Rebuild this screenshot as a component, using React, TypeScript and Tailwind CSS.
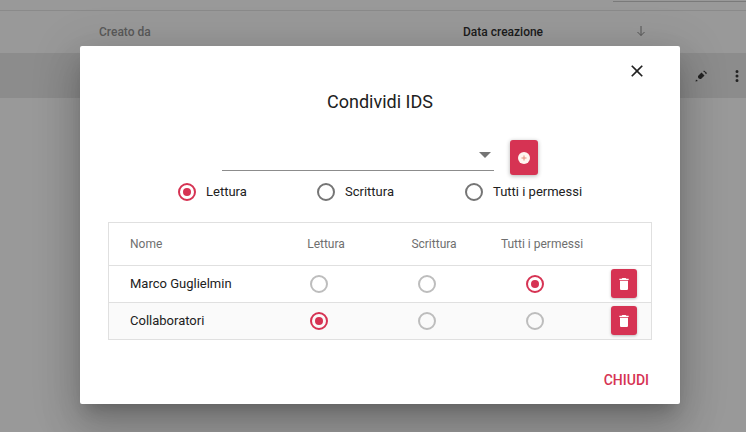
const crimson = 'bg-[#d63353]'

function Radio({ checked, muted, size = 'w-[18px] h-[18px]' }: { checked?: boolean; muted?: boolean; size?: string }) {
  return (
    <span
      className={`${size} rounded-full border-2 flex items-center justify-center shrink-0 ${
        checked ? 'border-[#d63353]' : muted ? 'border-[#bdbdbd]' : 'border-[#757575]'
      }`}
    >
      {checked && <span className={`w-[8px] h-[8px] rounded-full ${crimson}`} />}
    </span>
  )
}

function TrashButton() {
  return (
    <button className={`w-[26px] h-[29px] rounded-[3px] ${crimson} flex items-center justify-center shadow-[0_1px_3px_rgba(0,0,0,0.25)]`}>
      <svg width="16" height="16" viewBox="0 0 24 24" fill="#fff">
        <path d="M6 19c0 1.1.9 2 2 2h8c1.1 0 2-.9 2-2V7H6v12zM19 4h-3.5l-1-1h-5l-1 1H5v2h14V4z" />
      </svg>
    </button>
  )
}

const rows = [
  { name: 'Marco Guglielmin', selected: 2, striped: false },
  { name: 'Collaboratori', selected: 0, striped: true },
]

const options = [
  { label: 'Lettura', width: 'w-[139px]' },
  { label: 'Scrittura', width: 'w-[148px]' },
  { label: 'Tutti i permessi', width: 'w-auto' },
]

export default function App() {
  return (
    <div className="relative w-[746px] h-[432px] overflow-hidden bg-[#999999] font-['Roboto',sans-serif]">
      {/* page behind the dialog */}
      <div className="h-[11px] border-b border-[#8a8a8a] flex justify-end">
        <div className="mt-[1px] w-[133px] h-[1px] bg-[#7a7a7a]" />
      </div>
      <div className="h-[42px] relative text-[12px] font-medium">
        <span className="absolute left-[99px] top-[12px] text-[#5a5a5a]">Creato da</span>
        <span className="absolute left-[463px] top-[12px] text-[#1c1c1c]">Data creazione</span>
        <svg className="absolute left-[634px] top-[13px]" width="14" height="14" viewBox="0 0 14 14" fill="none" stroke="#555" strokeWidth="1">
          <path d="M7 2v9.5M3.5 8 7 11.5 10.5 8" />
        </svg>
      </div>
      <div className="h-[45px] bg-[#8c8c8c] flex items-center justify-end gap-[20px]">
        <svg width="13" height="13" viewBox="0 0 13 13" fill="#222">
          <path d="M1 10.5 3 12l-2.500 .5zM3 7l3.500-3.500 3 3L6 10c-1.500 .5-3.500-1-3-3zM8 2.500l1-1 3 2.500-1 1.200-.800-.700.300-.500-2-1.500z" />
        </svg>
        <svg width="18" height="18" viewBox="0 0 24 24" fill="#222">
          <path d="M12 8a2 2 0 1 0 0-4 2 2 0 0 0 0 4zm0 2a2 2 0 1 0 0 4 2 2 0 0 0 0-4zm0 6a2 2 0 1 0 0 4 2 2 0 0 0 0-4z" />
        </svg>
      </div>

      {/* dialog */}
      <div className="absolute left-[80px] top-[46px] w-[600px] h-[358px] bg-white rounded-[2px] shadow-[0_11px_15px_-7px_rgba(0,0,0,0.2),0_24px_38px_3px_rgba(0,0,0,0.14),0_9px_46px_8px_rgba(0,0,0,0.12)] flex flex-col">
        <div className="h-[35px] flex justify-end items-end pr-[33px]">
          <svg width="20" height="20" viewBox="0 0 24 24" fill="#212121">
            <path d="M19 6.41 17.59 5 12 10.59 6.41 5 5 6.41 10.59 12 5 17.59 6.41 19 12 13.41 17.59 19 19 17.59 13.41 12z" />
          </svg>
        </div>
        <h2 className="mt-[10px] text-center text-[18px] leading-[21px] text-[#212121]">Condividi IDS</h2>

        <div className="mt-[28px] flex items-start pl-[142px]">
          <div className="w-[272px] h-[31px] border-b border-[#8c8c8c] flex justify-end pr-[3px] pt-[12px]">
            <span className="w-0 h-0 border-l-[6px] border-r-[6px] border-t-[6px] border-l-transparent border-r-transparent border-t-[#757575]" />
          </div>
          <button className={`ml-[16px] w-[28px] h-[35px] rounded-[3px] ${crimson} flex items-center justify-center shadow-[0_1px_4px_rgba(0,0,0,0.3)]`}>
            <span className="w-[12px] h-[12px] rounded-full bg-[#fff5f0] flex items-center justify-center">
              <svg width="6" height="6" viewBox="0 0 6 6" stroke="#e58a7a" strokeWidth="1">
                <path d="M3 .5v5M.5 3h5" />
              </svg>
            </span>
          </button>
        </div>

        <div className="flex items-center pl-[98px] h-[34px]">
          {options.map((option, i) => (
            <label key={option.label} className={`${option.width} flex items-center gap-[10px] text-[13px] text-[#212121]`}>
              <Radio checked={i === 0} />
              {option.label}
            </label>
          ))}
        </div>

        <div className="mt-[13px] mx-[28px] border border-[#e0e0e0] text-[12px]">
          <div className="grid grid-cols-[156px_108px_108px_108px_1fr] h-[42px] items-center text-[#6f6f6f] text-center">
            <span className="pl-[21px] text-left">Nome</span>
            <span className="pl-[14px]">Lettura</span>
            <span className="pl-[14px]">Scrittura</span>
            <span className="pl-[14px] whitespace-nowrap">Tutti i permessi</span>
          </div>
          {rows.map((row) => (
            <div
              key={row.name}
              className={`grid grid-cols-[156px_108px_108px_108px_1fr] h-[37px] pb-[1px] items-center border-t border-[#e0e0e0] ${row.striped ? 'bg-[#fafafa]' : ''}`}
            >
              <span className="pl-[21px] text-[13px] text-[#212121]">{row.name}</span>
              {[0, 1, 2].map((col) => (
                <span key={col} className="flex justify-center">
                  <Radio checked={row.selected === col} muted />
                </span>
              ))}
              <span className="pl-[22px]">
                <TrashButton />
              </span>
            </div>
          ))}
        </div>

        <div className="flex justify-end pr-[31px] mt-[30px]">
          <span className="text-[14px] font-medium text-[#d63353]">CHIUDI</span>
        </div>
      </div>
    </div>
  )
}
